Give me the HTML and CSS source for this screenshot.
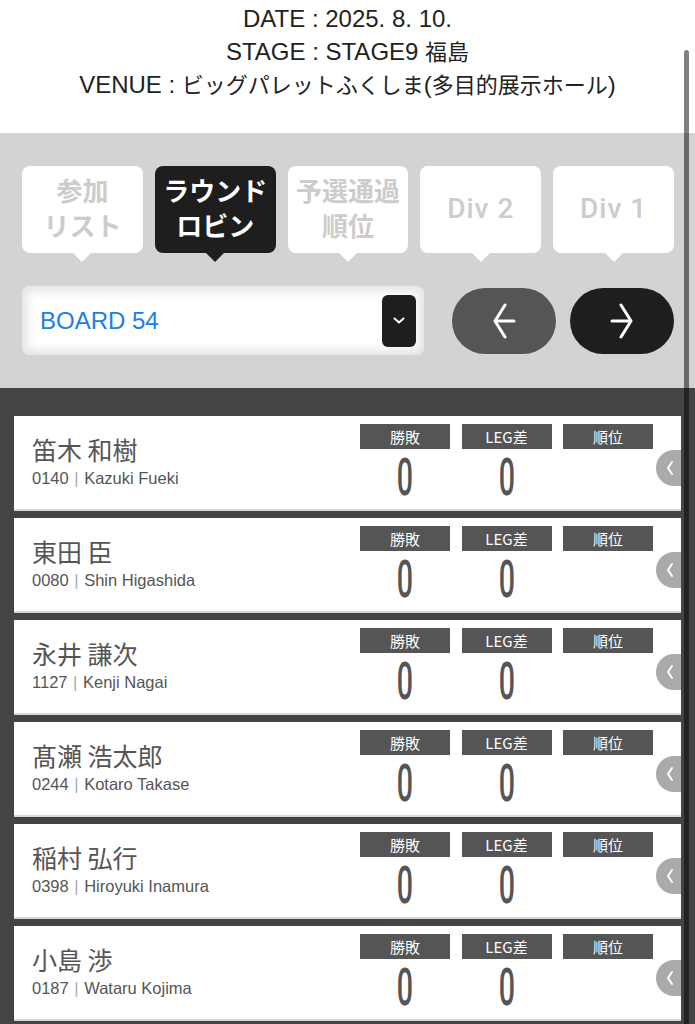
FILE: index.html
```html
<!DOCTYPE html>
<html>
<head>
    <title>ラウンドロビン</title>
    <link rel="stylesheet" href="styles.css">
</head>
<body>

    <div class="header">
        <p>DATE : 2025. 8. 10.</p>
        <p>STAGE : STAGE9 <span class="ja">福島</span></p>
        <p>VENUE : <span class="ja">ビッグパレットふくしま</span>(<span class="ja">多目的展示ホール</span>)</p>
    </div>

    <div class="controls">
        <div class="tabs">
            <div class="tab"><span>参加</span><span>リスト</span></div>
            <div class="tab active"><span>ラウンド</span><span>ロビン</span></div>
            <div class="tab"><span>予選通過</span><span>順位</span></div>
            <div class="tab single"><span>Div 2</span></div>
            <div class="tab single"><span>Div 1</span></div>
        </div>

        <div class="board-row">
            <div class="board-select">
                <span class="board-name">BOARD 54</span>
                <span class="drop-btn">
                    <svg width="12" height="8" viewBox="0 0 12 8"><path d="M1.5 1.5 L6 5.5 L10.5 1.5" fill="none" stroke="#fff" stroke-width="2" stroke-linecap="round" stroke-linejoin="round"/></svg>
                </span>
            </div>
            <button class="nav-btn prev">
                <svg width="26" height="36" viewBox="0 0 26 36"><path d="M23 18 H4 M14 2 L4 18 L14 34" fill="none" stroke="#fff" stroke-width="3" stroke-linecap="round" stroke-linejoin="round"/></svg>
            </button>
            <button class="nav-btn next">
                <svg width="26" height="36" viewBox="0 0 26 36"><path d="M3 18 H22 M12 2 L22 18 L12 34" fill="none" stroke="#fff" stroke-width="3" stroke-linecap="round" stroke-linejoin="round"/></svg>
            </button>
        </div>
    </div>

    <div class="list">
        <div class="card">
            <div class="player">
                <div class="name">笛木 和樹</div>
                <div class="sub">0140 <span class="bar">|</span> Kazuki Fueki</div>
            </div>
            <div class="stats">
                <div class="label">勝敗</div><div class="label">LEG差</div><div class="label">順位</div>
                <div class="value">0</div><div class="value">0</div><div class="value"></div>
            </div>
            <div class="side-tab"><svg width="10" height="16" viewBox="0 0 10 16"><path d="M7 2 L3 8 L7 14" fill="none" stroke="#fff" stroke-width="2" stroke-linecap="round" stroke-linejoin="round"/></svg></div>
        </div>
        <div class="card">
            <div class="player">
                <div class="name">東田 臣</div>
                <div class="sub">0080 <span class="bar">|</span> Shin Higashida</div>
            </div>
            <div class="stats">
                <div class="label">勝敗</div><div class="label">LEG差</div><div class="label">順位</div>
                <div class="value">0</div><div class="value">0</div><div class="value"></div>
            </div>
            <div class="side-tab"><svg width="10" height="16" viewBox="0 0 10 16"><path d="M7 2 L3 8 L7 14" fill="none" stroke="#fff" stroke-width="2" stroke-linecap="round" stroke-linejoin="round"/></svg></div>
        </div>
        <div class="card">
            <div class="player">
                <div class="name">永井 謙次</div>
                <div class="sub">1127 <span class="bar">|</span> Kenji Nagai</div>
            </div>
            <div class="stats">
                <div class="label">勝敗</div><div class="label">LEG差</div><div class="label">順位</div>
                <div class="value">0</div><div class="value">0</div><div class="value"></div>
            </div>
            <div class="side-tab"><svg width="10" height="16" viewBox="0 0 10 16"><path d="M7 2 L3 8 L7 14" fill="none" stroke="#fff" stroke-width="2" stroke-linecap="round" stroke-linejoin="round"/></svg></div>
        </div>
        <div class="card">
            <div class="player">
                <div class="name">髙瀬 浩太郎</div>
                <div class="sub">0244 <span class="bar">|</span> Kotaro Takase</div>
            </div>
            <div class="stats">
                <div class="label">勝敗</div><div class="label">LEG差</div><div class="label">順位</div>
                <div class="value">0</div><div class="value">0</div><div class="value"></div>
            </div>
            <div class="side-tab"><svg width="10" height="16" viewBox="0 0 10 16"><path d="M7 2 L3 8 L7 14" fill="none" stroke="#fff" stroke-width="2" stroke-linecap="round" stroke-linejoin="round"/></svg></div>
        </div>
        <div class="card">
            <div class="player">
                <div class="name">稲村 弘行</div>
                <div class="sub">0398 <span class="bar">|</span> Hiroyuki Inamura</div>
            </div>
            <div class="stats">
                <div class="label">勝敗</div><div class="label">LEG差</div><div class="label">順位</div>
                <div class="value">0</div><div class="value">0</div><div class="value"></div>
            </div>
            <div class="side-tab"><svg width="10" height="16" viewBox="0 0 10 16"><path d="M7 2 L3 8 L7 14" fill="none" stroke="#fff" stroke-width="2" stroke-linecap="round" stroke-linejoin="round"/></svg></div>
        </div>
        <div class="card">
            <div class="player">
                <div class="name">小島 渉</div>
                <div class="sub">0187 <span class="bar">|</span> Wataru Kojima</div>
            </div>
            <div class="stats">
                <div class="label">勝敗</div><div class="label">LEG差</div><div class="label">順位</div>
                <div class="value">0</div><div class="value">0</div><div class="value"></div>
            </div>
            <div class="side-tab"><svg width="10" height="16" viewBox="0 0 10 16"><path d="M7 2 L3 8 L7 14" fill="none" stroke="#fff" stroke-width="2" stroke-linecap="round" stroke-linejoin="round"/></svg></div>
        </div>
    </div>

    <div class="scroll-indicator"></div>

</body>
</html>
```

FILE: styles.css
```css
body {
    margin: 0;
    font-family: "Liberation Sans", "Noto Sans CJK JP", sans-serif;
    background: #444;
    height: 1024px;
    overflow: hidden;
    position: relative;
}

.header {
    background: #fff;
    height: 133px;
    box-sizing: border-box;
    padding-top: 2px;
    text-align: center;
    color: #222;
    font-size: 24px;
}

.header p {
    margin: 0;
    height: 33px;
    line-height: 33px;
}

.header .ja {
    font-family: "Noto Sans CJK JP", sans-serif;
    font-size: 22px;
    line-height: 1;
}

.controls {
    background: #d3d3d3;
    padding: 33px 21px 33px 22px;
}

.tabs {
    display: grid;
    grid-template-columns: repeat(5, 1fr);
    column-gap: 12px;
}

.tab {
    position: relative;
    height: 87px;
    box-sizing: border-box;
    padding-bottom: 5px;
    background: #fff;
    border-radius: 8px;
    color: #ccc;
    font-family: "Noto Sans CJK JP", sans-serif;
    font-weight: 700;
    font-size: 26px;
    display: flex;
    flex-direction: column;
    align-items: center;
    justify-content: center;
    gap: 2px;
    text-align: center;
}

.tab span {
    display: block;
    line-height: 33px;
    height: 33px;
}

.tab::after {
    content: '';
    position: absolute;
    left: 50%;
    bottom: -9px;
    margin-left: -9px;
    border-left: 9px solid transparent;
    border-right: 9px solid transparent;
    border-top: 9px solid #fff;
}

.tab.single {
    padding-bottom: 2px;
    font-family: Roboto, sans-serif;
    font-weight: 500;
    font-size: 28px;
    letter-spacing: 1px;
}

.tab.active {
    background: #1e1e1e;
    color: #fff;
}

.tab.active::after {
    border-top-color: #1e1e1e;
}

.board-row {
    display: flex;
    align-items: center;
    margin-top: 33px;
}

.board-select {
    width: 402px;
    height: 69px;
    box-sizing: border-box;
    border-radius: 8px;
    background: #fff;
    box-shadow: inset 0 0 10px 5px #e4e4e4;
    display: flex;
    align-items: center;
    padding: 0 8px 0 18px;
}

.board-name {
    flex: 1;
    color: #1a80e6;
    font-size: 24px;
}

.drop-btn {
    width: 34px;
    height: 52px;
    border-radius: 6px;
    background: #1e1e1e;
    display: flex;
    align-items: center;
    justify-content: center;
}

.nav-btn {
    width: 104px;
    height: 66px;
    border: none;
    border-radius: 33px;
    padding: 0;
    display: flex;
    align-items: center;
    justify-content: center;
}

.nav-btn.prev {
    background: #555;
    margin-left: 28px;
}

.nav-btn.next {
    background: #1e1e1e;
    margin-left: 14px;
}

.list {
    padding: 28px 14px 0;
    display: flex;
    flex-direction: column;
    gap: 7px;
}

.card {
    position: relative;
    flex: none;
    height: 95px;
    box-sizing: border-box;
    background: #fff;
    border-bottom: 2px solid #d8d8d8;
    display: flex;
    padding: 0 28px 0 18px;
}

.player {
    flex: 1;
    padding-top: 18px;
}

.name {
    color: #555;
    font-family: "Noto Sans CJK JP", sans-serif;
    font-size: 25px;
    line-height: 30px;
}

.sub {
    color: #555;
    font-size: 16.5px;
    line-height: 22px;
    margin-top: 3px;
}

.sub .bar {
    color: #aaa;
    margin: 0 1px;
}

.stats {
    display: grid;
    grid-template-columns: 90px 90px 90px;
    grid-template-rows: 25px 40px;
    column-gap: 11.5px;
    row-gap: 9px;
    padding-top: 8px;
}

.label {
    background: #555;
    color: #fff;
    font-family: "Noto Sans CJK JP", sans-serif;
    font-size: 15px;
    line-height: 25px;
    text-align: center;
}

.value {
    color: #555;
    font-family: Roboto, sans-serif;
    font-size: 52px;
    font-weight: 500;
    line-height: 40px;
    text-align: center;
    transform: scaleX(0.55);
}

.side-tab {
    position: absolute;
    right: 0;
    top: 34px;
    width: 25px;
    height: 36px;
    border-radius: 18px 0 0 18px;
    background: #aaa;
    display: flex;
    align-items: center;
    justify-content: center;
    padding-left: 3px;
    box-sizing: border-box;
}

.scroll-indicator {
    position: absolute;
    left: 684px;
    top: 50px;
    width: 5px;
    height: 980px;
    border-radius: 3px;
    background: rgba(0, 0, 0, 0.5);
}
```
